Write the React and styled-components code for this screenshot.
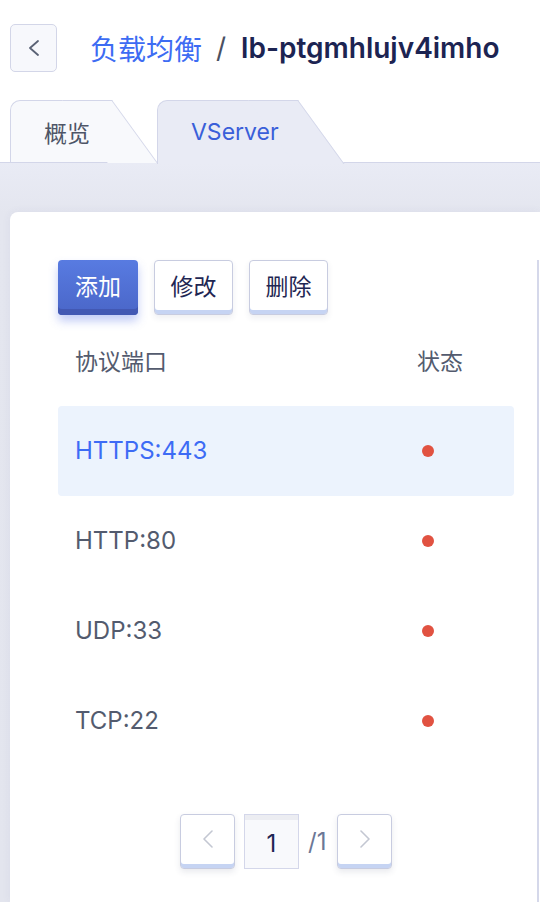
import React from 'react'
import styled, { createGlobalStyle } from 'styled-components'

const GlobalStyle = createGlobalStyle`
    body {
        margin: 0;
        background: #fff;
        font-family: Inter, "Noto Sans CJK SC", sans-serif;
    }
`

const listeners = [
    { port: 'HTTPS:443', active: true },
    { port: 'HTTP:80' },
    { port: 'UDP:33' },
    { port: 'TCP:22' },
]

const Chevron = ({ dir = 'left', color, w = 10, h = 14, stroke = 1.8 }) => (
    <svg width={w + 2} height={h + 2} viewBox={`0 0 ${w + 2} ${h + 2}`} fill="none">
        <polyline
            points={dir === 'left'
                ? `${w},1 2,${h / 2 + 1} ${w},${h + 1}`
                : `2,1 ${w},${h / 2 + 1} 2,${h + 1}`}
            stroke={color}
            strokeWidth={stroke}
            strokeLinecap="round"
            strokeLinejoin="round"
        />
    </svg>
)

export default function App() {
    return (
        <Page>
            <GlobalStyle />
            <TitleBar>
                <BackButton>
                    <Chevron dir="left" color="#5a6275" />
                </BackButton>
                <Crumb>负载均衡</Crumb>
                <Slash>/</Slash>
                <ResourceId>lb-ptgmhlujv4imho</ResourceId>
            </TitleBar>

            <Tabs>
                <Tab $width={102}>概览</Tab>
                <Tab $width={141} $active>VServer</Tab>
            </Tabs>

            <Stage>
                <Card>
                    <ListPane>
                        <Toolbar>
                            <Button $primary>添加</Button>
                            <Button>修改</Button>
                            <Button>删除</Button>
                        </Toolbar>

                        <Table>
                            <HeadRow>
                                <span>协议端口</span>
                                <span>状态</span>
                            </HeadRow>
                            {listeners.map((l) => (
                                <Row key={l.port} $active={l.active}>
                                    <span>{l.port}</span>
                                    <StatusCell><Dot /></StatusCell>
                                </Row>
                            ))}
                        </Table>

                        <Pager>
                            <PageButton>
                                <Chevron dir="left" color="#c3c7d2" h={16} stroke={1.6} />
                            </PageButton>
                            <PageInput>1</PageInput>
                            <Total>/1</Total>
                            <PageButton>
                                <Chevron dir="right" color="#c3c7d2" h={16} stroke={1.6} />
                            </PageButton>
                        </Pager>
                    </ListPane>
                    <DetailPane />
                </Card>
            </Stage>
        </Page>
    )
}

const Page = styled.div`
    height: 100vh;
    overflow: hidden;
    padding-top: 24px;
    box-sizing: border-box;
    display: flex;
    flex-direction: column;
`

const TitleBar = styled.div`
    display: flex;
    align-items: center;
    padding-left: 10px;
    height: 48px;
`

const BackButton = styled.div`
    width: 47px;
    height: 48px;
    box-sizing: border-box;
    border: 1.5px solid #d3d6e8;
    border-radius: 5px;
    background: #f7f8fc;
    display: flex;
    align-items: center;
    justify-content: center;
`

const Crumb = styled.span`
    margin-left: 33px;
    font-size: 28px;
    color: #3d6cf3;
`

const Slash = styled.span`
    margin: 0 15px 0 14px;
    font-size: 28px;
    color: #4a5062;
`

const ResourceId = styled.span`
    font-size: 28px;
    font-weight: 600;
    color: #1c2452;
`

const Tabs = styled.div`
    display: flex;
    align-items: flex-end;
    padding-left: 10px;
    margin-top: 28px;
    margin-bottom: -1.5px;
    position: relative;
    z-index: 1;
`

const Tab = styled.div`
    position: relative;
    z-index: ${(p) => (p.$active ? 2 : 1)};
    box-sizing: border-box;
    width: ${(p) => p.$width}px;
    height: ${(p) => (p.$active ? '63.5px' : '62px')};
    margin-bottom: ${(p) => (p.$active ? '0' : '1.5px')};
    margin-right: 45px;
    padding-left: 33px;
    display: flex;
    align-items: center;
    padding-bottom: ${(p) => (p.$active ? '1.5px' : '0')};
    font-size: 23px;
    color: ${(p) => (p.$active ? '#3a5fd9' : '#4e5567')};
    background: ${(p) => (p.$active ? '#e9ebf5' : '#f8f9fc')};
    border-top: 1.5px solid #d3d6e9;
    border-left: 1.5px solid #d3d6e9;
    border-top-left-radius: 10px;

    &::after {
        content: '';
        position: absolute;
        top: -1.5px;
        right: 0;
        width: 50px;
        height: calc(100% + 1.5px);
        box-sizing: border-box;
        background: inherit;
        border-top: 1.5px solid #d3d6e9;
        border-right: 1.5px solid #d3d6e9;
        transform: skewX(36deg);
        transform-origin: top;
        z-index: -1;
    }
`

const Stage = styled.div`
    flex: 1;
    background: linear-gradient(180deg, #e9ebf5 0, #e4e6ef 50px, #e3e5ee 100%);
    border-top: 1.5px solid #d3d6e9;
    padding: 48.5px 0 0 10px;
    display: flex;
    flex-direction: column;
`

const Card = styled.div`
    flex: 1;
    display: flex;
    background: #fff;
    border-top-left-radius: 8px;
    padding: 48px 0 0 48px;
    box-shadow: 0 0 10px rgba(60, 70, 130, 0.06);
`

const ListPane = styled.div`
    width: 479px;
    flex-shrink: 0;
`

const DetailPane = styled.div`
    flex: 1;
    border-left: 2px solid #d5d8ea;
`

const Toolbar = styled.div`
    display: flex;
    gap: 16px;
`

const Button = styled.div`
    width: ${(p) => (p.$primary ? '80px' : '79px')};
    height: 55px;
    box-sizing: border-box;
    border-radius: 4px;
    display: flex;
    align-items: center;
    justify-content: center;
    padding-bottom: 4px;
    font-size: 23px;
    color: ${(p) => (p.$primary ? '#fff' : '#1f2753')};
    background: ${(p) => (p.$primary ? 'linear-gradient(180deg, #587be1, #4a66c8)' : '#fff')};
    border: ${(p) => (p.$primary ? 'none' : '1.5px solid #c8cce0')};
    box-shadow: ${(p) =>
        p.$primary
            ? 'inset 0 -6px 0 #4258b3, 0 6px 10px rgba(80, 110, 230, 0.35)'
            : 'inset 0 -4px 0 #c6d4f3, 0 3px 6px rgba(40, 50, 90, 0.08)'};
`

const Table = styled.div`
    width: 456px;
`

const HeadRow = styled.div`
    display: grid;
    grid-template-columns: 1fr 97px;
    align-items: center;
    height: 91px;
    padding-left: 17px;
    font-size: 23px;
    color: #535b6e;
`

const Row = styled.div`
    display: grid;
    grid-template-columns: 1fr 97px;
    align-items: center;
    height: 90px;
    padding-left: 17px;
    border-radius: 4px;
    font-size: 24px;
    background: ${(p) => (p.$active ? '#ecf3fd' : 'transparent')};
    color: ${(p) => (p.$active ? '#3d6bf5' : '#535b6e')};
`

const StatusCell = styled.span`
    display: flex;
    align-items: center;
`

const Dot = styled.span`
    width: 12px;
    height: 12px;
    margin-left: 5px;
    border-radius: 50%;
    background: #e15241;
`

const Pager = styled.div`
    width: 456px;
    margin-top: 48px;
    display: flex;
    align-items: center;
    justify-content: center;
    gap: 9px;
`

const PageButton = styled.div`
    width: 55px;
    height: 55px;
    box-sizing: border-box;
    border: 1.5px solid #c8cce0;
    border-radius: 4px;
    background: #fff;
    display: flex;
    align-items: center;
    justify-content: center;
    padding-bottom: 4px;
    box-shadow: inset 0 -4px 0 #c6d4f3, 0 3px 6px rgba(40, 50, 90, 0.1);
`

const PageInput = styled.div`
    width: 55px;
    height: 55px;
    box-sizing: border-box;
    border: 1.5px solid #d4d7ea;
    background: #f8f9fc;
    box-shadow: inset 0 5px 0 #ecedf2;
    display: flex;
    align-items: center;
    justify-content: center;
    padding-top: 4px;
    font-size: 24px;
    color: #1d2654;
`

const Total = styled.span`
    width: 20px;
    font-size: 24px;
    color: #6c7796;
`
